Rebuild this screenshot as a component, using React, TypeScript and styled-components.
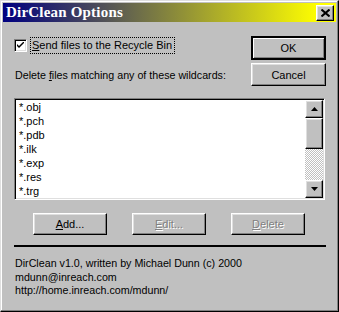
import React from "react";
import styled, { createGlobalStyle, css } from "styled-components";

const GlobalStyle = createGlobalStyle`
  html, body {
    margin: 0;
    padding: 0;
    background: #c0c0c0;
  }
  * {
    box-sizing: border-box;
  }
`;

const raised = css`
  border: 1px solid;
  border-color: #ffffff #000000 #000000 #ffffff;
  box-shadow: inset -1px -1px 0 #808080, inset 1px 1px 0 #dfdfdf;
`;

const Window = styled.div`
  width: 339px;
  height: 312px;
  background: #c0c0c0;
  border: 1px solid;
  border-color: #dfdfdf #000000 #000000 #dfdfdf;
  box-shadow: inset -1px -1px 0 #808080, inset 1px 1px 0 #ffffff;
  padding: 2px;
  display: flex;
  flex-direction: column;
  font-family: "Liberation Sans", Arial, sans-serif;
  font-size: 10.7px;
  color: #000;
`;

const TitleBar = styled.div`
  height: 19px;
  display: flex;
  align-items: center;
  justify-content: space-between;
  padding: 0 2px 0 3px;
  background: linear-gradient(to right, #000080 0%, #ffff00 95%, #ffff00 100%);
`;

const Title = styled.span`
  font-family: "Liberation Serif", "Times New Roman", serif;
  font-weight: bold;
  font-size: 15px;
  color: #fff;
  letter-spacing: 0.2px;
`;

const CloseButton = styled.div`
  ${raised};
  width: 18px;
  height: 16px;
  background: #c0c0c0;
  display: flex;
  align-items: center;
  justify-content: center;
`;

const Body = styled.div`
  flex: 1;
  display: flex;
  flex-direction: column;
  padding: 14px 10px 0 11px;
`;

const TopSection = styled.div`
  display: flex;
  justify-content: space-between;
`;

const LeftColumn = styled.div`
  display: flex;
  flex-direction: column;
  padding-top: 1px;
`;

const CheckRow = styled.div`
  display: flex;
  align-items: center;
  height: 16px;
`;

const CheckBox = styled.div`
  width: 13px;
  height: 13px;
  background: #fff;
  border: 1px solid;
  border-color: #808080 #ffffff #ffffff #808080;
  box-shadow: inset 1px 1px 0 #000, inset -1px -1px 0 #dfdfdf;
  display: flex;
  align-items: center;
  justify-content: center;
`;

const FocusLabel = styled.span`
  margin-left: 4px;
  padding: 1px 2px 1px 1px;
  outline: 1px dotted #000;
  outline-offset: 0;
  line-height: 13px;
  font-size: 11px;
`;

const PlainLabel = styled.div`
  margin-top: 16px;
  margin-left: 1px;
  line-height: 13px;
`;

const RightColumn = styled.div`
  display: flex;
  flex-direction: column;
  gap: 3px;
`;

const Button = styled.div<{ $default?: boolean; $disabled?: boolean; $h?: number; $w?: number }>`
  ${raised};
  width: ${(p) => p.$w ?? 74}px;
  height: ${(p) => p.$h ?? 22}px;
  display: flex;
  align-items: center;
  justify-content: center;
  background: #c0c0c0;
  font-size: 11px;
  color: ${(p) => (p.$disabled ? "#808080" : "#000")};
  text-shadow: ${(p) => (p.$disabled ? "1px 1px 0 #ffffff" : "none")};
  ${(p) =>
    p.$default &&
    css`
      border-width: 2px;
      border-color: #000;
      box-shadow: inset 1px 1px 0 #ffffff, inset -1px -1px 0 #808080;
    `}
`;

const Key = styled.span`
  text-decoration: underline;
`;

const ListBox = styled.div`
  margin-top: 12px;
  height: 102px;
  width: 311px;
  background: #fff;
  border: 1px solid;
  border-color: #808080 #ffffff #ffffff #808080;
  box-shadow: inset 1px 1px 0 #000, inset -1px -1px 0 #dfdfdf;
  padding: 1px;
  display: flex;
`;

const Items = styled.div`
  flex: 1;
  padding: 1px 0 0 3px;
`;

const Item = styled.div`
  height: 14px;
  line-height: 13px;
  font-size: 11px;
`;

const ScrollBar = styled.div`
  width: 18px;
  display: flex;
  flex-direction: column;
`;

const ScrollButton = styled.div<{ $h: number }>`
  ${raised};
  height: ${(p) => p.$h}px;
  background: #c0c0c0;
  display: flex;
  align-items: center;
  justify-content: center;
`;

const Track = styled.div`
  flex: 1;
  background-color: #fff;
  background-image: conic-gradient(#c0c0c0 25%, #fff 0 50%, #c0c0c0 0 75%, #fff 0);
  background-size: 2px 2px;
`;

const ButtonRow = styled.div`
  margin-top: 13px;
  display: flex;
  gap: 25px;
  padding-left: 19px;
`;

const Separator = styled.div`
  margin-top: 10px;
  height: 2px;
  width: 312px;
  background: #000;
`;

const Footer = styled.div`
  margin-top: 10px;
  margin-left: 1px;
  line-height: 13.5px;
`;

const Arrow = ({ up }: { up?: boolean }) => (
  <svg width="7" height="4" viewBox="0 0 7 4">
    <path d={up ? "M3.5 0 L7 4 L0 4 Z" : "M0 0 L7 0 L3.5 4 Z"} fill="#000" />
  </svg>
);

const wildcards = ["*.obj", "*.pch", "*.pdb", "*.ilk", "*.exp", "*.res", "*.trg"];

export default function App() {
  return (
    <>
      <GlobalStyle />
      <Window>
        <TitleBar>
          <Title>DirClean Options</Title>
          <CloseButton>
            <svg width="9" height="8" viewBox="0 0 9 8">
              <path d="M0.5 0.5 L8.5 7.5 M8.5 0.5 L0.5 7.5" stroke="#000" strokeWidth="2" />
            </svg>
          </CloseButton>
        </TitleBar>
        <Body>
          <TopSection>
            <LeftColumn>
              <CheckRow>
                <CheckBox>
                  <svg width="7" height="7" viewBox="0 0 7 7">
                    <path d="M0 2 L0 4 L2 6 L7 1 L7 -1 L2 4 Z" fill="#000" />
                  </svg>
                </CheckBox>
                <FocusLabel>
                  <Key>S</Key>end files to the Recycle Bin
                </FocusLabel>
              </CheckRow>
              <PlainLabel>
                Delete <Key>f</Key>iles matching any of these wildcards:
              </PlainLabel>
            </LeftColumn>
            <RightColumn>
              <Button $default $h={24} $w={75}>OK</Button>
              <Button $h={23} $w={75}>Cancel</Button>
            </RightColumn>
          </TopSection>

          <ListBox>
            <Items>
              {wildcards.map((w) => (
                <Item key={w}>{w}</Item>
              ))}
            </Items>
            <ScrollBar>
              <ScrollButton $h={18}>
                <Arrow up />
              </ScrollButton>
              <ScrollButton $h={31} />
              <Track />
              <ScrollButton $h={18}>
                <Arrow />
              </ScrollButton>
            </ScrollBar>
          </ListBox>

          <ButtonRow>
            <Button>
              <span>
                <Key>A</Key>dd...
              </span>
            </Button>
            <Button $disabled>
              <span>
                <Key>E</Key>dit...
              </span>
            </Button>
            <Button $disabled>
              <span>
                <Key>D</Key>elete
              </span>
            </Button>
          </ButtonRow>

          <Separator />

          <Footer>
            <div>DirClean v1.0, written by Michael Dunn (c) 2000</div>
            <div>mdunn@inreach.com</div>
            <div>http://home.inreach.com/mdunn/</div>
          </Footer>
        </Body>
      </Window>
    </>
  );
}
